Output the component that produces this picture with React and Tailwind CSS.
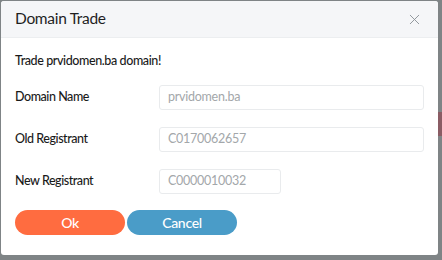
import React from "react";
import { X } from "lucide-react";

const fields = [
  { label: "Domain Name", value: "prvidomen.ba", width: "w-[265px]" },
  { label: "Old Registrant", value: "C0170062657", width: "w-[265px]" },
  { label: "New Registrant", value: "C0000010032", width: "w-[122px]" },
];

export default function App() {
  return (
    <div className="w-[442px] h-[260px] bg-[#7f8486] pt-px pl-px font-['Lato',sans-serif] overflow-hidden flex">
      <div className="w-[437px] h-[254px] bg-white rounded-[3px] overflow-hidden shrink-0">
        <div className="h-[37px] bg-[#f5f6f8] flex items-center justify-between pl-[14px] pr-[15px] border-b border-[#eceef0]">
          <h1 className="text-[15.5px] tracking-[-0.3px] text-[#1f1f1f]">Domain Trade</h1>
          <X size={17} strokeWidth={1.3} className="text-[#8a9196]" />
        </div>
        <div className="px-[14px] pt-[14px]">
          <p className="text-[12.5px] tracking-[-0.4px] text-[#1a1a1a] font-medium">Trade prvidomen.ba domain!</p>
          <div className="mt-[14px] flex flex-col gap-[17px]">
            {fields.map((f) => (
              <div key={f.label} className="flex items-center">
                <span className="w-[144px] text-[12.5px] tracking-[-0.45px] text-[#1a1a1a] font-medium">{f.label}</span>
                <div
                  className={`${f.width} h-[25px] border border-[#e9ebed] rounded-[3px] flex items-center px-[8px] text-[12.5px] tracking-[-0.25px] text-[#a3a7aa] bg-white`}
                >
                  {f.value}
                </div>
              </div>
            ))}
          </div>
          <div className="mt-[16px] flex gap-[2px]">
            <button className="w-[110px] h-[25px] rounded-full bg-[#ff6c40] text-white text-[14px] tracking-[-0.3px] font-medium">
              Ok
            </button>
            <button className="w-[110px] h-[25px] rounded-full bg-[#4a9cc8] text-white text-[14px] tracking-[-0.3px] font-medium">
              Cancel
            </button>
          </div>
        </div>
      </div>
      <div className="flex-1 pt-[111px]">
        <div className="h-[24px] bg-[#8a5c64]" />
      </div>
    </div>
  );
}
